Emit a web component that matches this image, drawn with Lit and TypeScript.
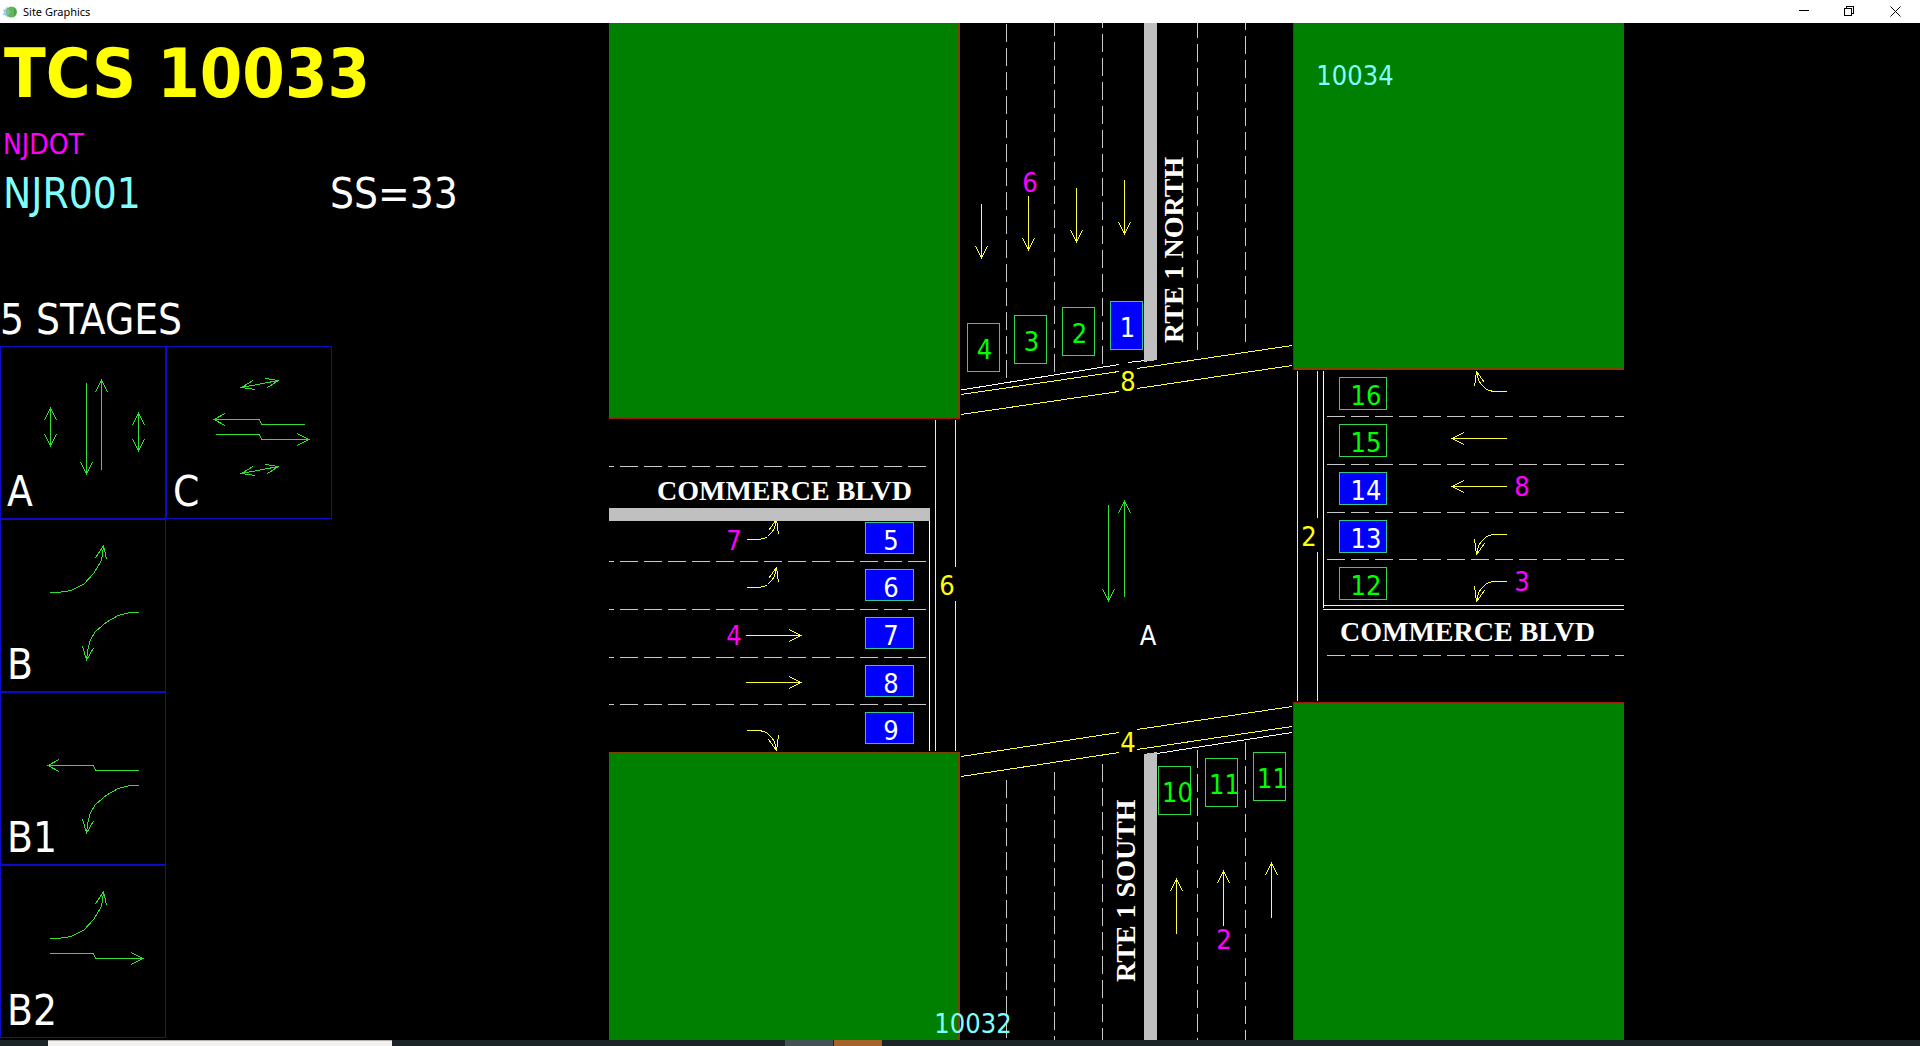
import { LitElement, html, svg, css } from "lit";
import { customElement, property } from "lit/decorators.js";
import { classMap } from "lit/directives/class-map.js";

type Point = [number, number];

interface Arrow {
  /** Polyline from tail to tip. */
  points: Point[];
  /** Ends of the two head strokes for each tip. */
  heads: [Point, Point, Point][];
}

const HEAD_LENGTH = 12;
const HEAD_HALF = 6;

/** Straight arrow along one axis, optionally with a head at both ends. */
function straight(from: Point, to: Point, both = false): Arrow {
  const head = (a: Point, b: Point): [Point, Point, Point] => {
    const dx = Math.sign(b[0] - a[0]);
    const dy = Math.sign(b[1] - a[1]);
    return [
      [b[0] - dx * HEAD_LENGTH - dy * HEAD_HALF, b[1] - dy * HEAD_LENGTH - dx * HEAD_HALF],
      b,
      [b[0] - dx * HEAD_LENGTH + dy * HEAD_HALF, b[1] - dy * HEAD_LENGTH + dx * HEAD_HALF],
    ];
  };
  return { points: [from, to], heads: both ? [head(from, to), head(to, from)] : [head(from, to)] };
}

/** Shifts and mirrors a list of points that is given relative to its tail. */
const place = (pts: Point[], x: number, y: number, sx = 1, sy = 1): Point[] =>
  pts.map(([px, py]) => [x + px * sx, y + py * sy]);

const TURN: Point[] = [[0, 0], [12, 0], [18, -1], [21, -3], [25, -7], [28, -11], [30, -20]];
const TURN_HEAD: Point[] = [[22, -9], [30, -20], [32, -5]];

function turn(x: number, y: number, sx: number, sy: number): Arrow {
  return {
    points: place(TURN, x, y, sx, sy),
    heads: [place(TURN_HEAD, x, y, sx, sy) as [Point, Point, Point]],
  };
}

const line = (pts: Point[]) => pts.map((p) => p.join(",")).join(" ");

const drawArrow = (a: Arrow, kind: string) => svg`
  <g class=${kind}>
    <polyline points=${line(a.points)}></polyline>
    ${a.heads.map((h) => svg`<polyline points=${line(h)}></polyline>`)}
  </g>`;

const WESTBOUND: Arrow = {
  points: [[139, 78.5], [95.5, 78.5], [93.5, 73.5], [48, 73.5]],
  heads: [[[59, 67.5], [48, 73.5], [59, 79.5]]],
};
const EASTBOUND: Arrow = {
  points: [[50, 88.5], [93.5, 88.5], [95.5, 93.5], [143, 93.5]],
  heads: [[[131, 87.5], [143, 93.5], [131, 99.5]]],
};
const LEFT_UP: Arrow = {
  points: [[50, 73.5], [61, 73], [71, 71.5], [84, 65], [94, 54], [101, 42], [102.5, 36], [103.5, 26.5]],
  heads: [[[95.5, 39], [103.5, 26.5], [106.5, 40]]],
};
const LEFT_DOWN: Arrow = {
  points: [[139, 93.5], [128, 94], [118, 96.5], [106, 103.5], [95, 113], [90, 122], [88, 130], [86.5, 141]],
  heads: [[[82.5, 127], [86.5, 141], [93.5, 129]]],
};
const walk = (dy: number): Arrow => ({
  points: [[75.5, 41.5 + dy], [112.5, 34.5 + dy]],
  heads: [
    [[87, 34.5 + dy], [75.5, 41.5 + dy], [89, 43.5 + dy]],
    [[99.5, 32.5 + dy], [112.5, 34.5 + dy], [101.5, 41.5 + dy]],
  ],
});

const STAGES: { name: string; column: number; arrows: Arrow[] }[] = [
  {
    name: "A",
    column: 1,
    arrows: [
      straight([50.5, 62], [50.5, 100], true),
      straight([86.5, 37], [86.5, 128]),
      straight([101.5, 124], [101.5, 34]),
      straight([138.5, 67], [138.5, 105], true),
    ],
  },
  { name: "C", column: 2, arrows: [walk(0), WESTBOUND, EASTBOUND, walk(86)] },
  { name: "B", column: 1, arrows: [LEFT_UP, LEFT_DOWN] },
  { name: "B1", column: 1, arrows: [WESTBOUND, LEFT_DOWN] },
  { name: "B2", column: 1, arrows: [LEFT_UP, EASTBOUND] },
];

@customElement("stage-list")
export class StageList extends LitElement {
  static styles = css`
    :host {
      display: block;
    }
    .stages {
      display: grid;
      grid-template-columns: repeat(2, 166px);
      margin: 0;
      padding: 0;
      list-style: none;
    }
    .stage {
      display: grid;
      border: 1px solid #0c0cc8;
    }
    .first {
      grid-column: 1;
    }
    .art,
    .name {
      grid-area: 1 / 1;
    }
    .art {
      display: block;
      width: 100%;
      shape-rendering: crispEdges;
    }
    .name {
      align-self: end;
      padding-left: 6px;
      font-size: 42px;
      line-height: 52px;
      color: #fff;
    }
    .flow {
      fill: none;
      stroke: #32e032;
    }
  `;

  render() {
    return html`
      <ul class="stages">
        ${STAGES.map(
          (s) => html`
            <li class=${classMap({ stage: true, first: s.column === 1 })}>
              <svg class="art" viewBox="1 1 164 171" aria-hidden="true">
                ${s.arrows.map((a) => drawArrow(a, "flow"))}
              </svg>
              <span class="name">${s.name}</span>
            </li>
          `
        )}
      </ul>
    `;
  }
}

interface Detector {
  id: string;
  x: number;
  y: number;
  w: number;
  h: number;
  tx: number;
  ty: number;
  on?: boolean;
}

const north = (id: string, x: number, y: number, on = false): Detector => ({
  id, x, y, w: 32, h: 48, tx: x + 17, ty: y + 35, on,
});
const west = (id: string, y: number): Detector => ({
  id, x: 865.5, y, w: 48, h: 31, tx: 891, ty: y + 27, on: true,
});
const east = (id: string, y: number, on = false): Detector => ({
  id, x: 1339.5, y, w: 47, h: 32, tx: 1366, ty: y + 27, on,
});
const south = (id: string, x: number, y: number): Detector => ({
  id, x, y, w: 32, h: 48, tx: x + 19, ty: y + 35,
});

const DETECTORS: Detector[] = [
  north("4", 967.5, 323.5),
  north("3", 1014.5, 315.5),
  north("2", 1062.5, 307.5),
  north("1", 1110.5, 301.5, true),
  west("5", 522.5),
  west("6", 569.5),
  west("7", 617.5),
  west("8", 665.5),
  west("9", 712.5),
  south("10", 1158.5, 766.5),
  south("11", 1205.5, 758.5),
  south("11", 1253.5, 752.5),
  east("16", 377.5),
  east("15", 424.5),
  east("14", 472.5, true),
  east("13", 520.5, true),
  east("12", 567.5),
];

/** Lane dividers; each starts at the stop line so the dashes line up there. */
const DIVIDERS: [number, number, number, number][] = [
  [1006.5, 378, 1006.5, 23],
  [1054.5, 372, 1054.5, 23],
  [1102.5, 364, 1102.5, 23],
  [1197.5, 350, 1197.5, 23],
  [1245.5, 342, 1245.5, 23],
  [1006.5, 780, 1006.5, 1040],
  [1054.5, 772, 1054.5, 1040],
  [1102.5, 764, 1102.5, 1040],
  [1197.5, 750, 1197.5, 1040],
  [1245.5, 742, 1245.5, 1040],
  [926, 466.5, 609, 466.5],
  [926, 561.5, 609, 561.5],
  [926, 609.5, 609, 609.5],
  [926, 657.5, 609, 657.5],
  [926, 704.5, 609, 704.5],
  [1327, 416.5, 1624, 416.5],
  [1327, 464.5, 1624, 464.5],
  [1327, 512.5, 1624, 512.5],
  [1327, 559.5, 1624, 559.5],
  [1327, 655.5, 1624, 655.5],
];

const CROSSWALKS: [number, number, number, number][] = [
  [961, 394.5, 1119, 371.5],
  [1137, 368.5, 1292, 345.5],
  [961, 414.5, 1119, 391.5],
  [1137, 388.5, 1292, 365.5],
  [961, 756.5, 1119, 732.5],
  [1137, 729.5, 1292, 706.5],
  [961, 776.5, 1119, 752.5],
  [1137, 749.5, 1292, 726.5],
  [935.5, 420, 935.5, 751],
  [955.5, 420, 955.5, 567],
  [955.5, 601, 955.5, 751],
  [1297.5, 371, 1297.5, 701],
  [1317.5, 371, 1317.5, 518],
  [1317.5, 552, 1317.5, 701],
  [1323, 605.5, 1624, 605.5],
  [1323, 609.5, 1624, 609.5],
];

const STOP_LINES: [number, number, number, number][] = [
  [961, 390, 1119, 364.5],
  [1128, 362.5, 1146, 360.5],
  [1157, 753.5, 1292, 732.5],
  [929.5, 521, 929.5, 751],
  [1323.5, 371, 1323.5, 608],
];

const MOVEMENTS: Arrow[] = [
  straight([981.5, 204], [981.5, 258]),
  straight([1028.5, 196], [1028.5, 250]),
  straight([1076.5, 188], [1076.5, 242]),
  straight([1124.5, 180], [1124.5, 234]),
  straight([1176.5, 934], [1176.5, 879]),
  straight([1223.5, 926], [1223.5, 871]),
  straight([1271.5, 918], [1271.5, 863]),
  straight([746, 635.5], [801, 635.5]),
  straight([746, 682.5], [801, 682.5]),
  straight([1507, 438.5], [1452, 438.5]),
  straight([1507, 486.5], [1452, 486.5]),
  turn(746.5, 539.5, 1, 1),
  turn(746.5, 587.5, 1, 1),
  turn(746.5, 730.5, 1, -1),
  turn(1506.5, 391.5, -1, 1),
  turn(1506.5, 534.5, -1, -1),
  turn(1506.5, 581.5, -1, -1),
];

const LABELS: { text: string; x: number; y: number; kind: string }[] = [
  { text: "6", x: 1030, y: 192, kind: "phase" },
  { text: "2", x: 1224, y: 949, kind: "phase" },
  { text: "7", x: 734, y: 550, kind: "phase" },
  { text: "4", x: 734, y: 645, kind: "phase" },
  { text: "8", x: 1522, y: 496, kind: "phase" },
  { text: "3", x: 1522, y: 591, kind: "phase" },
  { text: "8", x: 1128, y: 391, kind: "walk" },
  { text: "4", x: 1128, y: 752, kind: "walk" },
  { text: "6", x: 947, y: 595, kind: "walk" },
  { text: "2", x: 1309, y: 546, kind: "walk" },
  { text: "A", x: 1148, y: 645, kind: "plain" },
  { text: "10034", x: 1355, y: 85, kind: "site" },
  { text: "10032", x: 973, y: 1033, kind: "site" },
];

const segment = (s: [number, number, number, number], kind: string) =>
  svg`<line class=${kind} x1=${s[0]} y1=${s[1]} x2=${s[2]} y2=${s[3]}></line>`;

@customElement("intersection-map")
export class IntersectionMap extends LitElement {
  static styles = css`
    :host {
      display: block;
    }
    .map {
      display: block;
      width: 100%;
      shape-rendering: crispEdges;
    }
    .block {
      fill: #008000;
    }
    .edge {
      fill: #a01408;
    }
    .curb {
      fill: #7a4400;
    }
    .median {
      fill: #c0c0c0;
    }
    .divider {
      stroke: #c8c8c8;
      stroke-dasharray: 18 6;
    }
    .crosswalk {
      stroke: #ffff40;
    }
    .stop {
      stroke: #fff;
    }
    .movement {
      fill: none;
      stroke: #ffff40;
    }
    .active {
      fill: none;
      stroke: #32e032;
    }
    .box {
      fill: #000;
      stroke: #32d848;
    }
    .box-on {
      fill: #0000ff;
      stroke: #32c890;
    }
    .id,
    .label {
      font-size: 27px;
      text-anchor: middle;
    }
    .id {
      fill: #00ff00;
    }
    .id-on,
    .plain {
      fill: #fff;
    }
    .phase {
      fill: #ff00ff;
    }
    .walk {
      fill: #ffff00;
    }
    .site {
      fill: #80ffff;
    }
    .road {
      font-family: "Liberation Serif", serif;
      font-size: 28px;
      font-weight: 700;
      fill: #fff;
    }
  `;

  render() {
    return html`
      <svg class="map" viewBox="609 23 1015 1017" role="img" aria-label="Intersection layout">
        ${DIVIDERS.map((d) => segment(d, "divider"))}
        ${CROSSWALKS.map((c) => segment(c, "crosswalk"))}
        ${STOP_LINES.map((s) => segment(s, "stop"))}

        <rect class="curb" x="609" y="23" width="351" height="395"></rect>
        <rect class="edge" x="609" y="418" width="351" height="1"></rect>
        <rect class="block" x="609" y="23" width="349" height="395"></rect>

        <rect class="edge" x="1293" y="23" width="1" height="347"></rect>
        <rect class="curb" x="1294" y="368" width="330" height="2"></rect>
        <rect class="block" x="1294" y="23" width="330" height="345"></rect>

        <rect class="curb" x="609" y="752" width="351" height="288"></rect>
        <rect class="block" x="609" y="754" width="349" height="286"></rect>

        <rect class="edge" x="1293" y="702" width="331" height="338"></rect>
        <rect class="block" x="1294" y="703" width="330" height="337"></rect>

        ${MOVEMENTS.map((m) => drawArrow(m, "movement"))}
        ${drawArrow(straight([1108.5, 505], [1108.5, 601]), "active")}
        ${drawArrow(straight([1124.5, 597], [1124.5, 501]), "active")}

        <polygon class="median" points="1144,23 1157,23 1157,360 1144,362"></polygon>
        <polygon class="median" points="1144,754 1157,752 1157,1040 1144,1040"></polygon>
        <rect class="median" x="609" y="508" width="321" height="13"></rect>

        ${DETECTORS.map(
          (d) => svg`
            <rect class=${d.on ? "box-on" : "box"} x=${d.x} y=${d.y} width=${d.w} height=${d.h}></rect>
            <text class=${d.on ? "id id-on" : "id"} x=${d.tx} y=${d.ty}>${d.id}</text>`
        )}
        ${LABELS.map((l) => svg`<text class=${"label " + l.kind} x=${l.x} y=${l.y}>${l.text}</text>`)}

        <text class="road" x="657" y="500">COMMERCE BLVD</text>
        <text class="road" x="1340" y="641">COMMERCE BLVD</text>
        <text class="road" transform="translate(1183 343) rotate(-90)">RTE 1 NORTH</text>
        <text class="road" transform="translate(1135 982) rotate(-90)">RTE 1 SOUTH</text>
      </svg>
    `;
  }
}

@customElement("title-bar")
export class TitleBar extends LitElement {
  @property() heading = "";

  static styles = css`
    :host {
      display: flex;
      align-items: center;
      height: 23px;
      padding: 0 2px;
      background: #fff;
      color: #000;
    }
    .logo {
      width: 16px;
      height: 16px;
      margin-right: 5px;
    }
    .heading {
      flex: 1;
      margin: 0;
      font: 400 11px/16px "Noto Sans", "Open Sans", sans-serif;
    }
    .control {
      display: grid;
      place-items: center;
      width: 46px;
      height: 21px;
      margin: 0;
      padding: 0;
      border: 0;
      background: none;
      color: inherit;
    }
    .glyph {
      width: 11px;
      height: 11px;
      fill: none;
      stroke: currentColor;
    }
    .crisp {
      shape-rendering: crispEdges;
    }
  `;

  render() {
    return html`
      <svg class="logo" viewBox="0 0 16 16" aria-hidden="true">
        <path d="M5 2.500L3.500 5L1 6L2 8.500L0.500 10.500L4 12L6 13.500L9 8Z" fill="#a8ccf0"></path>
        <circle cx="9.500" cy="8" r="5.500" fill="#62b65a"></circle>
        <path d="M6 4.500A5.500 5.500 0 0 0 6 11.500L8.500 8Z" fill="#7cc4a0"></path>
        <path d="M12 3.500A5.500 5.500 0 0 1 12 12.500Z" fill="#4ea050"></path>
      </svg>
      <h1 class="heading">${this.heading}</h1>
      <button class="control" type="button" aria-label="Minimize">
        <svg class="glyph crisp" viewBox="0 0 11 11"><path d="M1 4.500H11"></path></svg>
      </button>
      <button class="control" type="button" aria-label="Restore">
        <svg class="glyph crisp" viewBox="0 0 11 11">
          <path d="M0.500 2.500H7.500V9.500H0.500ZM2.500 2.500V0.500H9.500V7.500H7.500"></path>
        </svg>
      </button>
      <button class="control" type="button" aria-label="Close">
        <svg class="glyph" viewBox="0 0 11 11"><path d="M0.500 0.500L10.500 10.500M10.500 0.500L0.500 10.500"></path></svg>
      </button>
    `;
  }
}

@customElement("app-root")
export class AppRoot extends LitElement {
  static styles = css`
    :host {
      display: flex;
      flex-direction: column;
      min-height: 100vh;
      background: #000;
      font-family: "DejaVu Sans Condensed", "DejaVu Sans", sans-serif;
    }
    .workspace {
      flex: 1;
      display: grid;
      grid-template-columns: 609fr 1015fr 296fr;
      align-items: start;
    }
    .summary {
      padding-top: 11px;
      color: #fff;
      white-space: nowrap;
    }
    .controller {
      margin: 0;
      padding-left: 4px;
      font-size: 68px;
      line-height: 80px;
      font-weight: 700;
      color: #ffff00;
    }
    .agency {
      margin: 0;
      padding-left: 3px;
      font-size: 28px;
      line-height: 62px;
      color: #ff00ff;
    }
    .route {
      display: grid;
      grid-template-columns: 327px auto;
      margin: 0 0 84px;
      padding-left: 3px;
      font-size: 42px;
      line-height: 36px;
    }
    .code {
      color: #80ffff;
    }
    .count {
      margin: 0 0 2px;
      font-size: 42px;
      line-height: 48px;
      font-weight: 400;
    }
    .taskbar {
      display: grid;
      grid-template-columns: 48fr 344fr 393fr 48fr 1fr 48fr 1038fr;
      height: 6px;
      background: #1c2428;
    }
    .search {
      grid-column: 2;
      background: #f3f0f0;
      border-top: 1px solid #b0b0b0;
      box-sizing: border-box;
    }
    .task {
      grid-column: 4;
      background: #435054;
    }
    .current {
      grid-column: 6;
      background: #a5622a;
    }
  `;

  render() {
    return html`
      <title-bar heading="Site Graphics"></title-bar>
      <main class="workspace">
        <section class="summary">
          <h2 class="controller">TCS 10033</h2>
          <p class="agency">NJDOT</p>
          <p class="route"><span class="code">NJR001</span><span>SS=33</span></p>
          <h3 class="count">5 STAGES</h3>
          <stage-list></stage-list>
        </section>
        <intersection-map></intersection-map>
      </main>
      <footer class="taskbar">
        <span class="search"></span>
        <span class="task"></span>
        <span class="current"></span>
      </footer>
    `;
  }
}
